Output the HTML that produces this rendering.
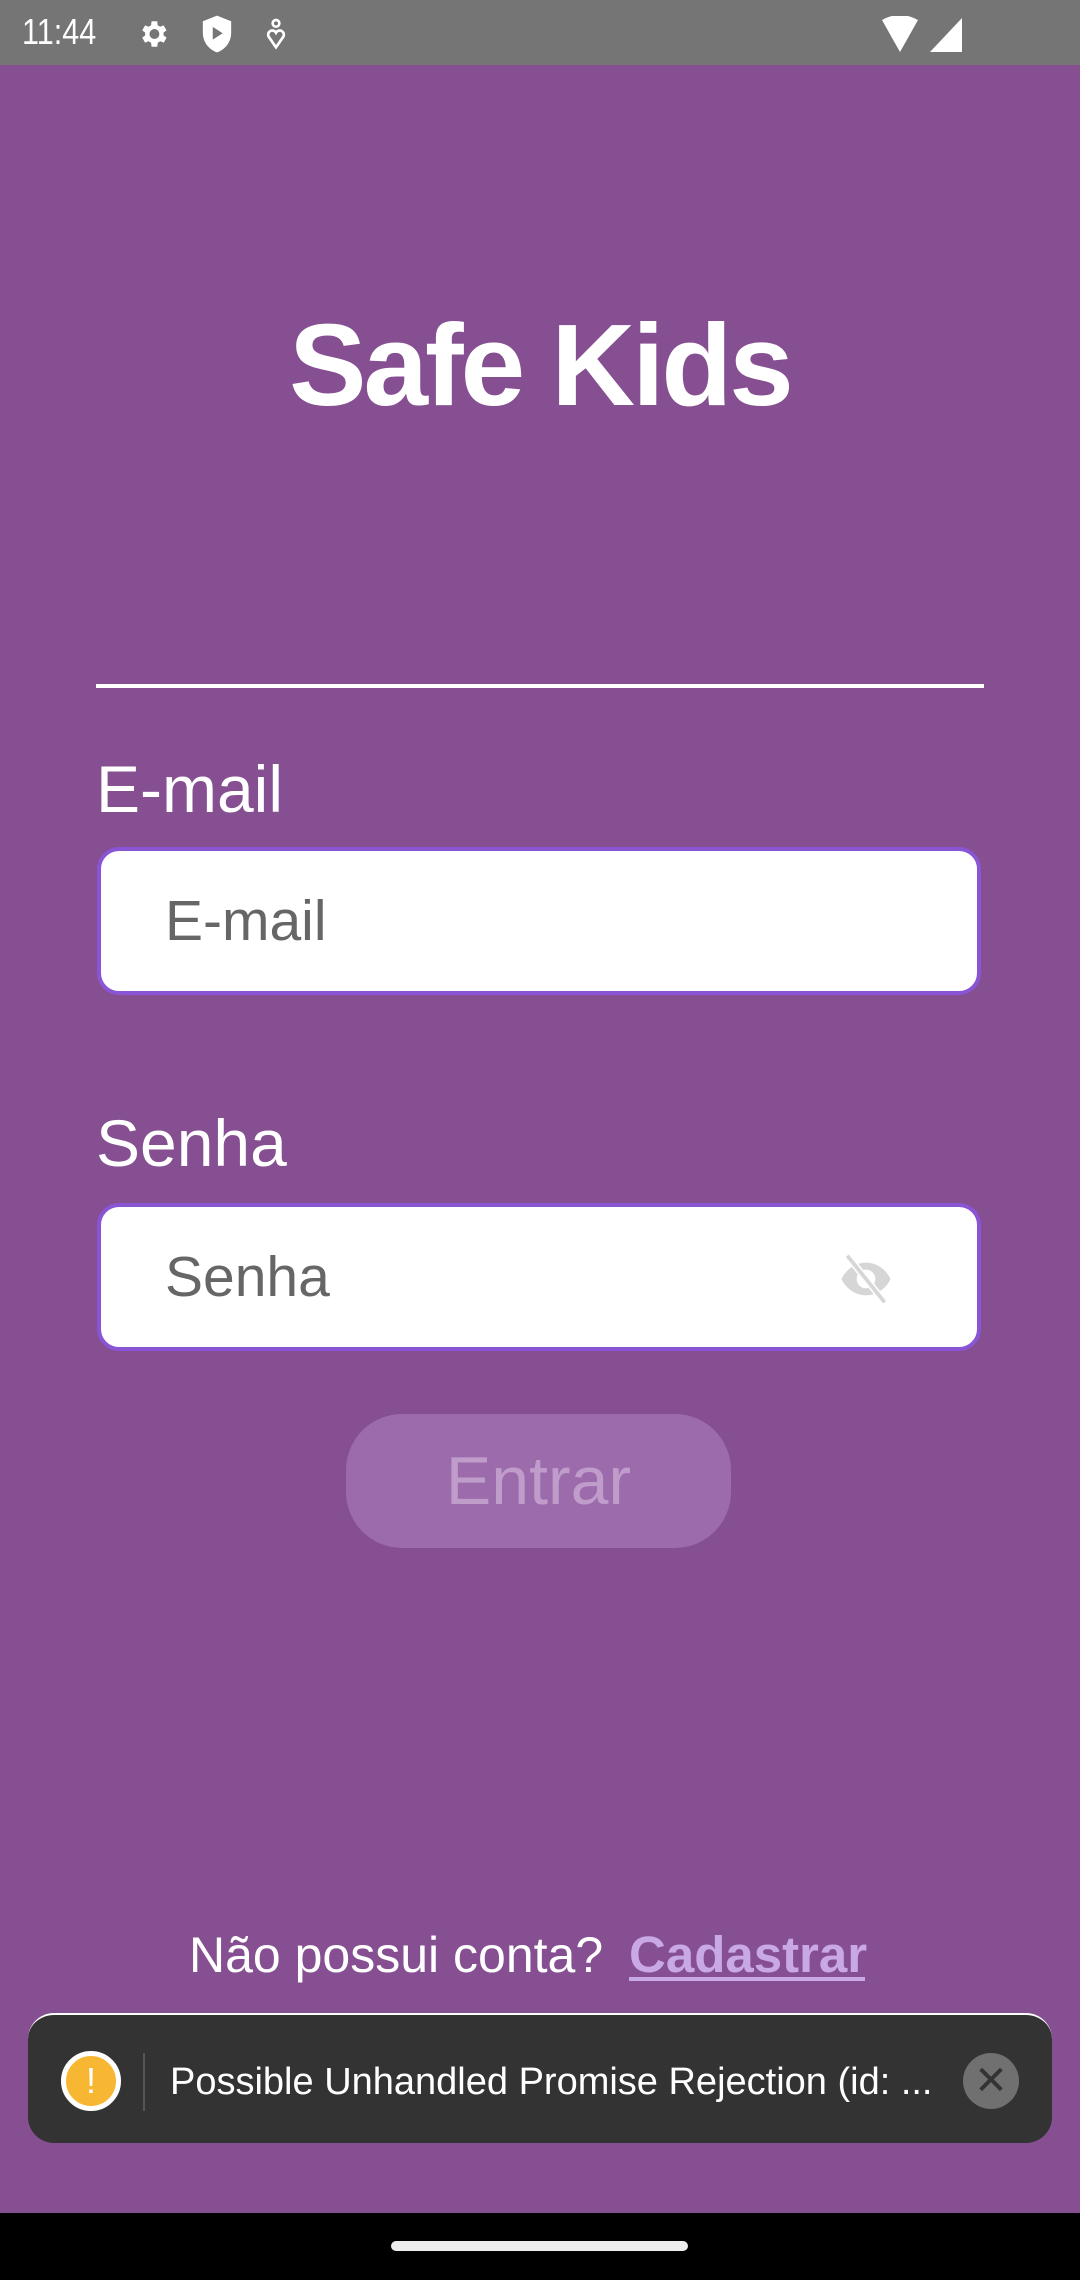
<!DOCTYPE html>
<html><head><meta charset="utf-8"><style>
*{margin:0;padding:0;box-sizing:border-box}
body{width:1080px;height:2280px;background:#864f92;font-family:"Liberation Sans",sans-serif;position:relative;overflow:hidden}
.abs{position:absolute}
.status{left:0;top:0;width:1080px;height:65px;background:#757575}
.title{left:0;width:1080px;text-align:center;top:290px;font-size:116px;font-weight:bold;color:#fff;letter-spacing:-3px;line-height:150px}
.line{left:96px;top:684px;width:888px;height:4px;background:#fff}
.label{left:96px;color:#fff;font-size:66px;line-height:70px}
.input{left:97px;width:884px;height:148px;background:#fff;border:4px solid #8a55d4;border-radius:22px}
.ph{position:absolute;left:64px;top:0;line-height:140px;font-size:57px;color:#666}
.btn{left:346px;top:1414px;width:385px;height:134px;background:#9b6bab;border-radius:56px;color:#c09ccb;font-size:68px;text-align:center;line-height:134px}
.toast{left:28px;top:2013px;width:1024px;height:130px;background:#333;border-radius:26px;border-top:2px solid #fff}
.nav{left:0;top:2213px;width:1080px;height:67px;background:#000}
</style></head><body>
<div class="abs status">
<div class="abs" style="left:22px;top:8px;color:#fff;font-size:36px;line-height:48px;transform:scaleX(.85);transform-origin:left">11:44</div>
<svg class="abs" style="left:136px;top:16px" width="34" height="36" viewBox="0 0 24 24"><path fill="#fff" d="M19.4 13a7.5 7.5 0 000-2l2.1-1.6-2-3.5-2.5 1a7 7 0 00-1.7-1L15 3h-4l-.4 2.9a7 7 0 00-1.7 1l-2.5-1-2 3.5L6.5 11a7.5 7.5 0 000 2l-2.1 1.6 2 3.5 2.5-1a7 7 0 001.7 1L11 21h4l.4-2.9a7 7 0 001.7-1l2.5 1 2-3.5zM13 15.5A3.5 3.5 0 1113 8.5a3.5 3.5 0 010 7z"/></svg>
<svg class="abs" style="left:200px;top:14px" width="34" height="40" viewBox="0 0 24 28"><path fill="#fff" d="M12 1L2 5v8c0 7 4.5 12 10 14 5.5-2 10-7 10-14V5z"/><path fill="#757575" d="M9 9v9l7-4.5z"/></svg>
<svg class="abs" style="left:264px;top:18px" width="24" height="32" viewBox="0 0 16 24"><circle cx="8" cy="4" r="2.5" fill="none" stroke="#fff" stroke-width="2"/><path d="M8 22L2.5 14a3 3 0 015.5-3 3 3 0 015.5 3z" fill="none" stroke="#fff" stroke-width="2"/></svg>
<svg class="abs" style="left:880px;top:16px" width="84" height="36" viewBox="0 0 84 36"><path fill="#fff" d="M2 4Q20-6 38 4L20 36z"/><path fill="#fff" d="M82 2V36H50z"/></svg>
</div>
<div class="abs title">Safe Kids</div>
<div class="abs line"></div>
<div class="abs label" style="top:754px">E-mail</div>
<div class="abs input" style="top:847px"><div class="ph">E-mail</div></div>
<div class="abs label" style="top:1108px">Senha</div>
<div class="abs input" style="top:1203px"><div class="ph">Senha</div>
<svg class="abs" style="left:734px;top:44px" width="62" height="56" viewBox="0 0 24 24"><path fill="#d6d6d6" d="M12 5C7 5 3 8.5 1.5 12 3 15.5 7 19 12 19s9-3.5 10.5-7C21 8.5 17 5 12 5zm0 11a4 4 0 110-8 4 4 0 010 8z"/><path stroke="#fff" stroke-width="3" d="M4 2l16 20"/><path stroke="#d6d6d6" stroke-width="1.6" d="M4 2l16 20"/></svg>
</div>
<div class="abs btn">Entrar</div>
<div class="abs" style="left:189px;top:1925px;font-size:50px;line-height:60px;color:#fff">Não possui conta?</div>
<div class="abs" style="left:629px;top:1925px;font-size:51px;line-height:60px;color:#c9a8e6;font-weight:bold">Cadastrar</div>
<div class="abs" style="left:629px;top:1977px;width:236px;height:4px;background:#c9a8e6"></div>
<div class="abs toast">
<div class="abs" style="left:33px;top:36px;width:60px;height:60px;border-radius:50%;background:#f7b733;border:5px solid #fff;color:#fff;font-size:36px;text-align:center;line-height:50px">!</div>
<div class="abs" style="left:115px;top:38px;width:2px;height:58px;background:#555"></div>
<div class="abs" style="left:142px;top:42px;color:#fff;font-size:38px;line-height:50px;white-space:nowrap">Possible Unhandled Promise Rejection (id: ...</div>
<div class="abs" style="left:935px;top:38px;width:56px;height:56px;border-radius:50%;background:#707070;color:#333;font-size:40px;text-align:center;line-height:56px">✕</div>
</div>
<div class="abs nav"><div class="abs" style="left:391px;top:28px;width:297px;height:10px;border-radius:5px;background:#eee"></div></div>
</body></html>
